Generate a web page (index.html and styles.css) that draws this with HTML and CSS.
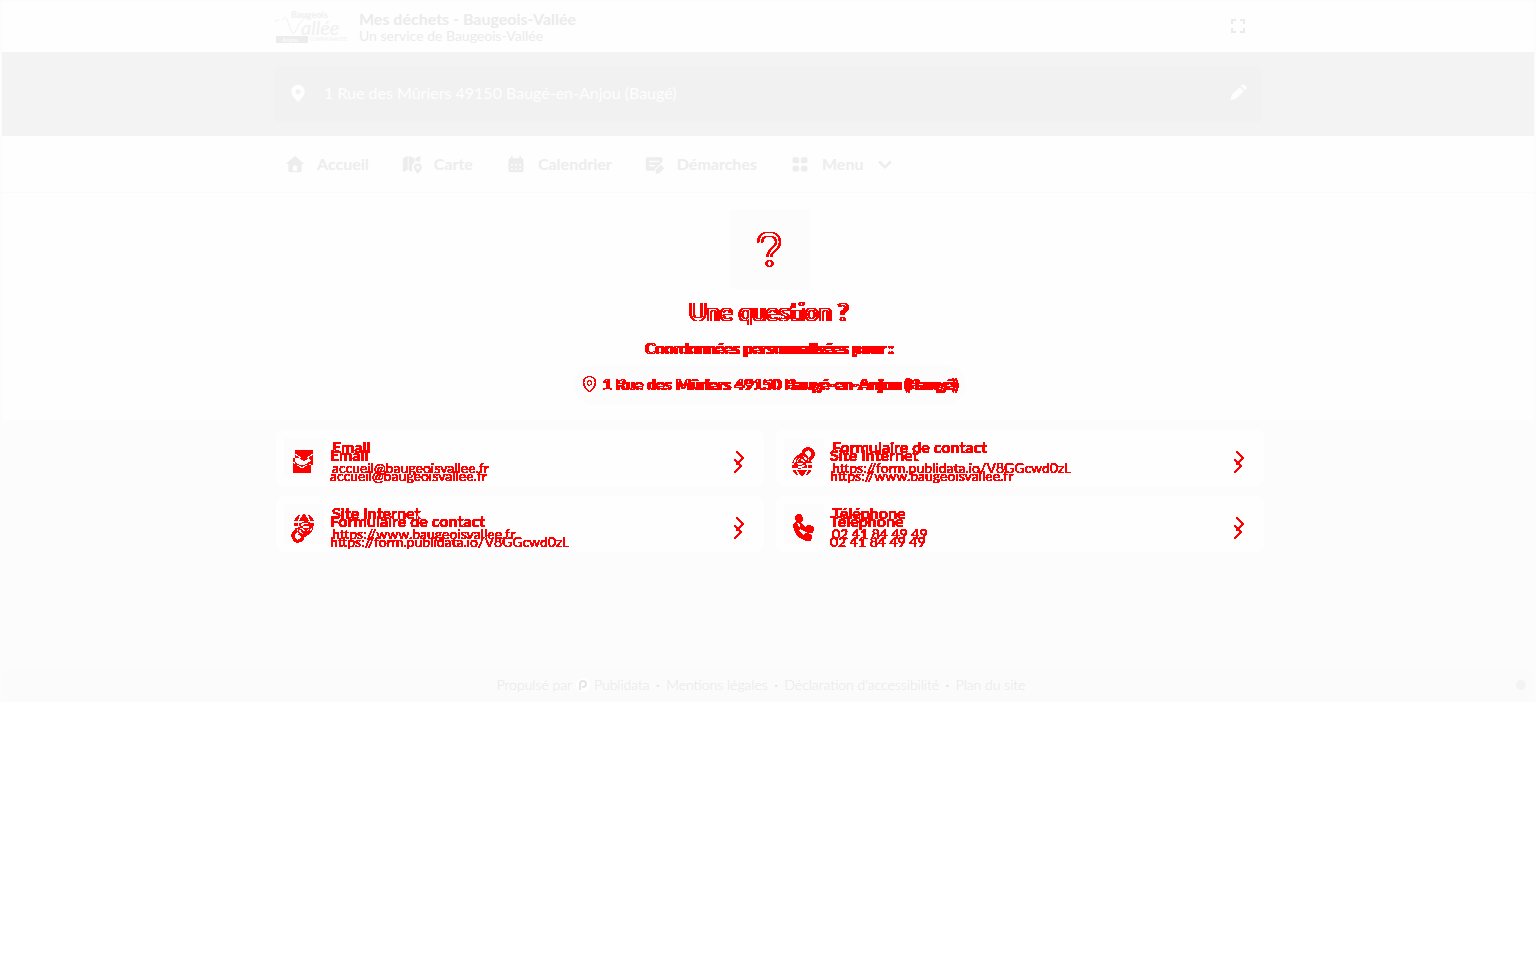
FILE: index.html
```html
<!DOCTYPE html>
<html lang="fr">
<head>
    <meta charset="UTF-8">
    <meta name="viewport" content="width=device-width, initial-scale=1.0">
    <title>Mes déchets - Baugeois-Vallée</title>
    <link rel="stylesheet" href="styles.css">
</head>
<body>
    <!-- Symboles partagés -->
    <svg class="defs" aria-hidden="true">
        <filter id="changed" x="0" y="0" width="100%" height="100%" color-interpolation-filters="sRGB">
            <feColorMatrix values="0 0 0 0 1  0 0 0 0 0  0 0 0 0 0  1 0 0 0 0"/>
            <feComponentTransfer><feFuncA type="discrete" tableValues="0 1 1 1 1 1 1 1 1 1"/></feComponentTransfer>
        </filter>
        <symbol id="mail" viewBox="0 0 24 24"><path fill="currentColor" d="M5 4h14a2 2 0 0 1 2 2v1l-9 6L3 7V6a2 2 0 0 1 2-2zM3 9l9 6 9-6v8a2 2 0 0 1-2 2H5a2 2 0 0 1-2-2z"/></symbol>
        <symbol id="link" viewBox="0 0 24 24"><g fill="none" stroke="currentColor" stroke-width="2.4" stroke-linecap="round"><path d="M10 14a5 5 0 0 0 7 0l3-3a5 5 0 0 0-7-7l-1.500 1.500"/><path d="M14 10a5 5 0 0 0-7 0l-3 3a5 5 0 0 0 7 7l1.500-1.500"/></g></symbol>
        <symbol id="globe" viewBox="0 0 24 24"><path fill="currentColor" d="M16.400 9A22 22 0 0 0 12 2 22 22 0 0 0 7.600 9zM7.200 11v3h9.600v-3zM7.600 16A18 18 0 0 0 12 22a18 18 0 0 0 4.400-6zM5.600 9c.4-2.500 1.300-4.700 2.600-6.200A10 10 0 0 0 2.500 9zM18.400 9h3.100a10 10 0 0 0-5.700-6.200C17.100 4.300 18 6.500 18.400 9zM2.100 11v3h3.200v-3zM18.700 11v3h3.200v-3zM5.600 16H2.900a10 10 0 0 0 5.300 5.200C6.900 20 6 18.200 5.600 16zM18.400 16c-.4 2.200-1.300 4-2.600 5.200a10 10 0 0 0 5.300-5.200z"/></symbol>
        <symbol id="phone" viewBox="0 0 24 24"><path fill="currentColor" d="M5 3l2.500-.7c1-.2 1.700.2 2 1l1.300 3.200c.3.800.1 1.500-.5 2L8.500 10c1 2.500 3 4.500 5.500 5.500l1.500-1.800c.5-.6 1.200-.8 2-.5l3.200 1.300c.8.300 1.200 1 1 2L21 19c-.2 1-1 1.500-2 1.500C10.500 20.500 3.500 13.500 3.500 5c0-1 .5-1.800 1.500-2z"/></symbol>
        <symbol id="chevron" viewBox="0 0 24 24"><path fill="none" stroke="currentColor" stroke-width="1.600" d="M8 4l8 8-8 8"/></symbol>
        <symbol id="question" viewBox="0 0 24 36"><path fill="none" stroke="currentColor" stroke-width="4" d="M3 12c0-6 3.500-9 9-9s9 3 9 8c0 4-2.500 6-5 8-2 1.600-3.500 3-3.500 7"/><circle cx="12.500" cy="32.500" r="3" fill="currentColor"/></symbol>
        <symbol id="pin" viewBox="0 0 24 24"><path fill="currentColor" d="M12 2a8 8 0 0 0-8 8c0 5 4 9 8 13 4-4 8-8 8-13a8 8 0 0 0-8-8zm0 5.500a3 3 0 1 1 0 6 3 3 0 0 1 0-6z"/></symbol>
    </svg>

    <div class="page">
        <header class="top">
            <div class="container top-row">
                <svg class="logo" viewBox="0 0 72 38" role="img" aria-label="Baugeois Vallée">
                    <text x="17" y="10" class="logo-name">Baugeois</text>
                    <path d="M1 14q1-3 4-2M8 12c3-5 5-1 7 5s3 8 5 8 4-12 13-17"/>
                    <text x="27" y="27" class="logo-script">allée</text>
                    <rect x="2" y="28" width="32" height="7"/>
                    <text x="8" y="34" class="logo-tag">Anjou</text>
                    <text x="36" y="33" class="logo-small">COMMUNAUTÉ</text>
                </svg>
                <div class="titles">
                    <strong>Mes déchets - Baugeois-Vallée</strong>
                    <span>Un service de Baugeois-Vallée</span>
                </div>
                <button class="icon-button" type="button" aria-label="Plein écran">
                    <svg viewBox="0 0 20 20"><path fill="none" stroke="currentColor" stroke-width="2" d="M4 8V4h4M12 4h4v4M16 12v4h-4M8 16H4v-4"/></svg>
                </button>
            </div>
        </header>

        <div class="band">
            <div class="container">
                <button class="address" type="button">
                    <svg viewBox="0 0 24 24"><use href="#pin"/></svg>
                    <span>1 Rue des Mûriers 49150 Baugé-en-Anjou (Baugé)</span>
                    <svg viewBox="0 0 24 24"><path fill="currentColor" d="M3 21l1.500-7L14 5l5 5-9.500 9zM15.500 3.500l1-1c1-1 2.500-1 3.500 0l1.500 1.500c1 1 1 2.500 0 3.500l-1 1z"/></svg>
                </button>
            </div>
        </div>

        <nav class="menu">
            <div class="container menu-row">
                <a href="#">
                    <svg viewBox="0 0 24 24"><path fill="currentColor" d="M12 2L1 12h3v8a2 2 0 0 0 2 2h12a2 2 0 0 0 2-2v-8h3zM9.500 20v-4a2.500 2.500 0 0 1 5 0v4z"/></svg>
                    Accueil
                </a>
                <a href="#">
                    <svg viewBox="0 0 24 24"><path fill="currentColor" d="M1 5l6-3v17l-6 3zM8 2l7 3v5l-3 4v8l-4-3zM16 5l6-3v8a7 7 0 0 0-6-1zM19 11a5 5 0 0 0-5 5c0 3 3 5 5 8 2-3 5-5 5-8a5 5 0 0 0-5-5zm0 3a2 2 0 1 1 0 4 2 2 0 0 1 0-4z"/></svg>
                    Carte
                </a>
                <a href="#">
                    <svg viewBox="0 0 24 24"><path fill="currentColor" fill-rule="evenodd" d="M6 2h2v3h8V2h2v3h1a2 2 0 0 1 2 2v2H3V7a2 2 0 0 1 2-2h1zM3 9h18v11a2 2 0 0 1-2 2H5a2 2 0 0 1-2-2zM6 12v2h2v-2zM11 12v2h2v-2zM16 12v2h2v-2zM6 17v2h2v-2zM11 17v2h2v-2zM16 17v2h2v-2z"/></svg>
                    Calendrier
                </a>
                <a href="#">
                    <svg viewBox="0 0 24 24"><path fill="currentColor" fill-rule="evenodd" d="M3 4h16a2 2 0 0 1 2 2v3l-9 9v2H3a2 2 0 0 1-2-2V6a2 2 0 0 1 2-2zM5 8v2h12V8zM5 13v2h7v-2zM13 24v-5l6-6 4 4-6 6z"/></svg>
                    Démarches
                </a>
                <button type="button">
                    <svg viewBox="0 0 24 24"><path fill="currentColor" d="M5 4h4a2 2 0 0 1 2 2v3a2 2 0 0 1-2 2H5a2 2 0 0 1-2-2V6a2 2 0 0 1 2-2zM15 4h4a2 2 0 0 1 2 2v3a2 2 0 0 1-2 2h-4a2 2 0 0 1-2-2V6a2 2 0 0 1 2-2zM5 14h4a2 2 0 0 1 2 2v3a2 2 0 0 1-2 2H5a2 2 0 0 1-2-2v-3a2 2 0 0 1 2-2zM15 14h4a2 2 0 0 1 2 2v3a2 2 0 0 1-2 2h-4a2 2 0 0 1-2-2v-3a2 2 0 0 1 2-2z"/></svg>
                    Menu
                    <svg viewBox="0 0 24 24"><path fill="none" stroke="currentColor" stroke-width="3" d="M5 9l7 7 7-7"/></svg>
                </button>
            </div>
        </nav>

        <main>
            <section class="hero">
                <div class="hero-icon">
                    <div class="diff stack">
                        <svg><use href="#question"/></svg>
                        <svg class="second" aria-hidden="true"><use href="#question"/></svg>
                    </div>
                </div>
                <h1 class="diff stack">
                    <span>Une question ?</span>
                    <span class="second" aria-hidden="true">Une question ?</span>
                </h1>
                <p class="diff stack">
                    <span>Coordonnées personnalisées pour :</span>
                    <span class="second" aria-hidden="true">Coordonnées personnalisées pour :</span>
                </p>
                <div class="pill">
                    <div class="diff stack">
                        <span><svg><use href="#pin"/></svg>1 Rue des Mûriers 49150 Baugé-en-Anjou (Baugé)</span>
                        <span class="second" aria-hidden="true"><svg><use href="#pin"/></svg>1 Rue des Mûriers 49150 Baugé-en-Anjou (Baugé)</span>
                    </div>
                </div>
            </section>

            <section class="contacts">
                <div class="container cards">
                    <a class="card" href="#">
                        <span class="icon-box"></span>
                        <span class="diff cover">
                            <span class="layer">
                                <svg class="icon"><use href="#mail"/></svg>
                                <span class="label"><b>Email</b><span>accueil@baugeoisvallee.fr</span></span>
                                <svg class="arrow"><use href="#chevron"/></svg>
                            </span>
                            <span class="layer low">
                                <svg class="icon"><use href="#mail"/></svg>
                                <span class="label"><b>Email</b><span>accueil@baugeoisvallee.fr</span></span>
                                <svg class="arrow"><use href="#chevron"/></svg>
                            </span>
                        </span>
                    </a>
                    <a class="card" href="#">
                        <span class="icon-box"></span>
                        <span class="diff cover">
                            <span class="layer">
                                <svg class="icon"><use href="#link"/></svg>
                                <span class="label"><b>Formulaire de contact</b><span>https://form.publidata.io/V8GGcwd0zL</span></span>
                                <svg class="arrow"><use href="#chevron"/></svg>
                            </span>
                            <span class="layer low">
                                <svg class="icon"><use href="#globe"/></svg>
                                <span class="label"><b>Site Internet</b><span>https://www.baugeoisvallee.fr</span></span>
                                <svg class="arrow"><use href="#chevron"/></svg>
                            </span>
                        </span>
                    </a>
                    <a class="card" href="#">
                        <span class="icon-box"></span>
                        <span class="diff cover">
                            <span class="layer">
                                <svg class="icon"><use href="#globe"/></svg>
                                <span class="label"><b>Site Internet</b><span>https://www.baugeoisvallee.fr</span></span>
                                <svg class="arrow"><use href="#chevron"/></svg>
                            </span>
                            <span class="layer low">
                                <svg class="icon"><use href="#link"/></svg>
                                <span class="label"><b>Formulaire de contact</b><span>https://form.publidata.io/V8GGcwd0zL</span></span>
                                <svg class="arrow"><use href="#chevron"/></svg>
                            </span>
                        </span>
                    </a>
                    <a class="card" href="#">
                        <span class="icon-box"></span>
                        <span class="diff cover">
                            <span class="layer">
                                <svg class="icon"><use href="#phone"/></svg>
                                <span class="label"><b>Téléphone</b><span>02 41 84 49 49</span></span>
                                <svg class="arrow"><use href="#chevron"/></svg>
                            </span>
                            <span class="layer low">
                                <svg class="icon"><use href="#phone"/></svg>
                                <span class="label"><b>Téléphone</b><span>02 41 84 49 49</span></span>
                                <svg class="arrow"><use href="#chevron"/></svg>
                            </span>
                        </span>
                    </a>
                </div>
            </section>
        </main>

        <footer>
            <div class="footer-links">
                <a class="brand" href="#">Propulsé par
                    <svg viewBox="0 0 14 14"><circle cx="7" cy="7" r="7" fill="#fff"/><path fill="none" stroke="currentColor" stroke-width="2" d="M4 12V6a3 3 0 1 1 3 3H6"/></svg>
                    Publidata</a>
                <span>•</span>
                <a href="#">Mentions légales</a>
                <span>•</span>
                <a href="#">Déclaration d'accessibilité</a>
                <span>•</span>
                <a href="#">Plan du site</a>
            </div>
            <span class="status"></span>
        </footer>
    </div>
</body>
</html>
```
FILE: styles.css
```css
* {
    box-sizing: border-box;
}
body {
    margin: 0;
    font-family: Lato, "Liberation Sans", sans-serif;
    font-size: 16px;
    line-height: 20px;
    color: #ebebeb;
    background-color: #fff;
}
a {
    color: inherit;
    text-decoration: none;
}
button {
    font: inherit;
    color: inherit;
    background: none;
    border: none;
    padding: 0;
    cursor: pointer;
}
.defs {
    position: absolute;
    width: 0;
    height: 0;
}
.page {
    border: 2px solid #fcfcfc;
    border-bottom: none;
    background-color: #fefefe;
}
.container {
    max-width: 988px;
    margin: 0 auto;
}

/* en-tête */
.top-row {
    display: flex;
    align-items: center;
    height: 50px;
}
.logo {
    width: 72px;
    height: 38px;
    margin-right: 13px;
    overflow: visible;
}
.logo path {
    fill: none;
    stroke: #f2f2f2;
    stroke-width: 1;
}
.logo rect {
    fill: #ececec;
}
.logo text {
    fill: #f0f0f0;
}
.logo-name {
    font-size: 9px;
    font-weight: 900;
}
.logo-script {
    font-size: 20px;
    font-style: italic;
}
.logo .logo-tag {
    font-size: 6px;
    font-weight: 900;
    fill: #fafafa;
}
.logo-small {
    font-size: 5px;
}
.titles {
    display: flex;
    flex-direction: column;
    flex: 1;
    line-height: 17px;
}
.titles span {
    font-size: 14px;
}
.icon-button {
    padding: 0 14px 2px 0;
}
.icon-button svg {
    display: block;
    width: 20px;
    height: 20px;
}

/* adresse */
.band {
    padding: 14px 0;
    background-color: #f3f3f3;
}
.address {
    display: flex;
    align-items: center;
    gap: 16px;
    width: 100%;
    height: 56px;
    padding: 0 14px 2px;
    border-radius: 6px;
    background-color: #f1f1f1;
    color: #fefefe;
    text-align: left;
}
.address span {
    flex: 1;
}
.address svg {
    width: 20px;
    height: 20px;
}

/* navigation */
.menu {
    border-bottom: 1px solid #fbfbfb;
}
.menu-row {
    display: flex;
    gap: 11px;
    height: 56px;
}
.menu-row a,
.menu-row button {
    display: flex;
    align-items: center;
    gap: 12px;
    padding: 0 11px;
    font-weight: 700;
    color: #ededed;
}
.menu-row svg {
    width: 20px;
    height: 20px;
}

/* calques superposés : les zones communes s'annulent */
.diff {
    isolation: isolate;
    color: #fff;
    background-color: #000;
    filter: url(#changed);
}
.diff > * {
    mix-blend-mode: difference;
}
.stack {
    display: grid;
    justify-items: center;
    align-items: center;
}
.stack > * {
    grid-area: 1 / 1;
    margin-right: 4px;
}
.stack > .second {
    margin-right: 0;
}

.hero {
    display: flex;
    flex-direction: column;
    align-items: center;
    padding: 16px 0 15px 4px;
}
.hero-icon {
    display: grid;
    place-items: center;
    width: 80px;
    height: 80px;
    border-radius: 4px;
    background-color: #fcfcfc;
}
.hero-icon svg {
    width: 24px;
    height: 36px;
}
.hero h1 {
    margin: 8px 0 11px;
    font-size: 24px;
    line-height: 30px;
}
.hero p {
    margin: 0 0 7px;
    font-weight: 600;
}
.pill {
    display: grid;
    align-items: center;
    height: 40px;
    padding: 0 6px 2px;
    border-radius: 20px;
    background-color: #fcfcfc;
    font-weight: 600;
}
.hero p .second,
.pill .second {
    font-weight: 700;
}
.pill span {
    display: flex;
    align-items: center;
    gap: 4px;
}
.pill svg {
    width: 18px;
    height: 18px;
}

/* contacts */
.contacts {
    min-height: 250px;
    padding: 10px 0 10px 4px;
    background-color: #fcfcfc;
}
.cards {
    display: grid;
    grid-template-columns: 1fr 1fr;
    gap: 10px 12px;
}
.card {
    position: relative;
    display: flex;
    padding: 8px;
    border-radius: 8px;
    background-color: #fefefe;
}
.icon-box {
    width: 40px;
    height: 40px;
    border-radius: 4px;
    background-color: #fcfcfc;
}
.cover {
    position: absolute;
    inset: 0;
}
.layer {
    position: absolute;
    top: 8px;
    left: 8px;
    right: 8px;
    display: flex;
    align-items: center;
    gap: 16px;
}
.low {
    top: 16px;
    left: 6px;
    right: 10px;
}
.icon {
    width: 24px;
    height: 24px;
    margin-left: 8px;
}
.label {
    display: flex;
    flex: 1;
    flex-direction: column;
}
.label b {
    padding-bottom: 2px;
    line-height: 18px;
}
.label span {
    font-size: 14px;
}
.arrow {
    width: 20px;
    height: 20px;
    margin-right: 6px;
}

/* pied de page */
footer {
    position: relative;
    height: 32px;
    background-color: #fbfbfb;
}
.footer-links {
    display: flex;
    align-items: center;
    justify-content: center;
    gap: 6px;
    height: 32px;
    padding: 0 14px 2px 0;
    font-size: 14px;
    font-weight: 300;
    color: #e6e6e6;
}
.footer-links span {
    font-size: 8px;
}
.brand {
    display: flex;
    align-items: center;
    gap: 4px;
}
.brand svg {
    width: 14px;
    height: 14px;
}
.status {
    position: absolute;
    top: 10px;
    right: 8px;
    width: 10px;
    height: 10px;
    border-radius: 50%;
    background-color: #f3f3f3;
}
```
